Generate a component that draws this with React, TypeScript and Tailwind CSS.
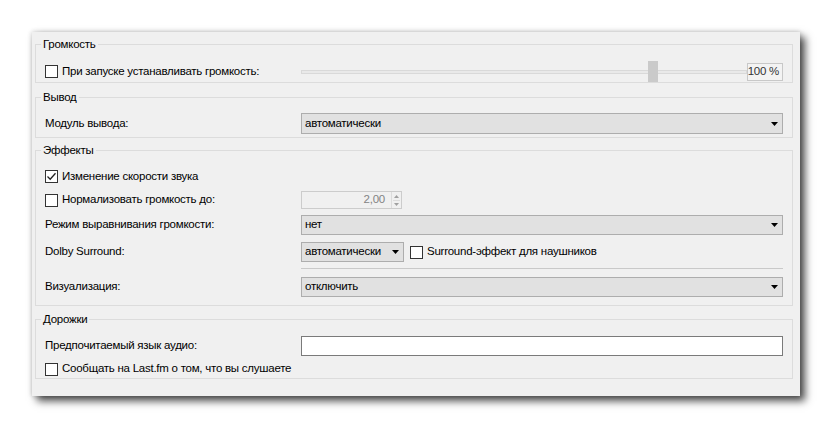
import type { ReactNode } from "react";

function Checkbox({ checked = false }: { checked?: boolean }) {
  return (
    <div className="w-[13px] h-[13px] shrink-0 border border-[#333333] bg-white flex items-center justify-center">
      {checked && (
        <svg width="11" height="11" viewBox="0 0 11 11">
          <path d="M1.5 5.5 L4.2 8.2 L9.5 2.2" stroke="#202020" strokeWidth="1.3" fill="none" />
        </svg>
      )}
    </div>
  );
}

function Arrow() {
  return (
    <svg width="7" height="4" viewBox="0 0 7 4" className="shrink-0">
      <path d="M0 0 H7 L3.5 4 Z" fill="#000" />
    </svg>
  );
}

function Select({ value, className = "" }: { value: string; className?: string }) {
  return (
    <div
      className={`h-[20px] flex items-center justify-between border border-[#adadad] bg-[#e1e1e1] pl-[3px] pr-[4px] ${className}`}
    >
      <span className="whitespace-nowrap">{value}</span>
      <Arrow />
    </div>
  );
}

function Group({ title, className = "", children }: { title: string; className?: string; children: ReactNode }) {
  return (
    <fieldset className={`border border-[#dcdcdc] m-0 p-0 min-w-0 ${className}`}>
      <legend className="ml-[5px] px-[2px] leading-[14px]">{title}</legend>
      <div className="pl-[9px] pr-[9px]">{children}</div>
    </fieldset>
  );
}

function Row({ label, h = "h-[20px]", children }: { label: ReactNode; h?: string; children?: ReactNode }) {
  return (
    <div className={`flex items-center ${h}`}>
      <div className="w-[256px] shrink-0 flex items-center whitespace-nowrap">{label}</div>
      <div className="flex-1 flex items-center min-w-0">{children}</div>
    </div>
  );
}

function CheckLabel({ checked, text }: { checked?: boolean; text: string }) {
  return (
    <div className="flex items-center gap-[4px] whitespace-nowrap">
      <Checkbox checked={checked} />
      <span>{text}</span>
    </div>
  );
}

export default function App() {
  return (
    <div className="w-[833px] h-[428px] bg-white pt-[32px] pl-[32px] font-['Liberation_Sans',Arial,sans-serif] text-[11.5px] tracking-[-0.25px] text-black">
      <div className="w-[768px] h-[364px] bg-[#f0f0f0] pl-[3px] pr-[7px] pt-[5px] shadow-[5px_5px_8px_rgba(0,0,0,0.7),0_0_5px_rgba(0,0,0,0.22)]">
        <Group title="Громкость">
          <div className="pt-[10px]">
            <Row label={<CheckLabel text="При запуске устанавливать громкость:" />} h="h-[21px]">
              <div className="flex-1 relative h-[21px] flex items-center">
                <div className="w-full h-[4px] border border-[#d9d9d9] bg-[#e9e9e9]" />
                <div className="absolute left-[347px] top-0 w-[10px] h-[21px] bg-[#cacaca]" />
              </div>
              <div className="w-[36px] h-[18px] shrink-0 whitespace-nowrap border border-[#c8c8c8] bg-[#f3f3f3] flex items-center justify-end pr-[3px] text-[#333333]">
                100 %
              </div>
            </Row>
          </div>
        </Group>

        <Group title="Вывод" className="mt-[7px]">
          <div className="pt-[9px] pb-[3px]">
            <Row label="Модуль вывода:" h="h-[21px]">
              <Select value="автоматически" className="flex-1 h-[21px]" />
            </Row>
          </div>
        </Group>

        <Group title="Эффекты" className="mt-[5px]">
          <div className="pt-[9px] pb-[8px]">
            <Row label={<CheckLabel checked text="Изменение скорости звука" />} h="h-[21px]" />
            <div className="mt-[4px]">
              <Row label={<CheckLabel text="Нормализовать громкость до:" />} h="h-[18px]">
                <div className="w-[101px] h-[18px] border border-[#cccccc] bg-[#f0f0f0] flex items-center justify-end text-[#838383]">
                  <span className="pr-[6px]">2,00</span>
                  <div className="w-[10px] h-full flex flex-col items-center justify-center gap-[2px] border-l border-[#dcdcdc]">
                    <svg width="5" height="3" viewBox="0 0 5 3">
                      <path d="M0 3 H5 L2.5 0 Z" fill="#a0a0a0" />
                    </svg>
                    <div className="w-[7px] h-px bg-[#dcdcdc]" />
                    <svg width="5" height="3" viewBox="0 0 5 3">
                      <path d="M0 0 H5 L2.5 3 Z" fill="#a0a0a0" />
                    </svg>
                  </div>
                </div>
              </Row>
            </div>
            <div className="mt-[6px]">
              <Row label="Режим выравнивания громкости:">
                <Select value="нет" className="flex-1" />
              </Row>
            </div>
            <div className="mt-[7px]">
              <Row label="Dolby Surround:">
                <Select value="автоматически" className="w-[103px]" />
                <div className="ml-[6px]">
                  <CheckLabel text="Surround-эффект для наушников" />
                </div>
              </Row>
            </div>
            <div className="ml-[256px] mt-[6px] h-px bg-[#c9c9c9]" />
            <div className="mt-[8px]">
              <Row label="Визуализация:">
                <Select value="отключить" className="flex-1" />
              </Row>
            </div>
          </div>
        </Group>

        <Group title="Дорожки" className="mt-[6px]">
          <div className="pt-[10px]">
            <Row label="Предпочитаемый язык аудио:">
              <div className="flex-1 h-[20px] border border-[#7a7a7a] bg-white" />
            </Row>
            <div className="mt-[4px]">
              <Row label={<CheckLabel text="Сообщать на Last.fm о том, что вы слушаете" />} h="h-[18px]" />
            </div>
          </div>
        </Group>
      </div>
    </div>
  );
}
